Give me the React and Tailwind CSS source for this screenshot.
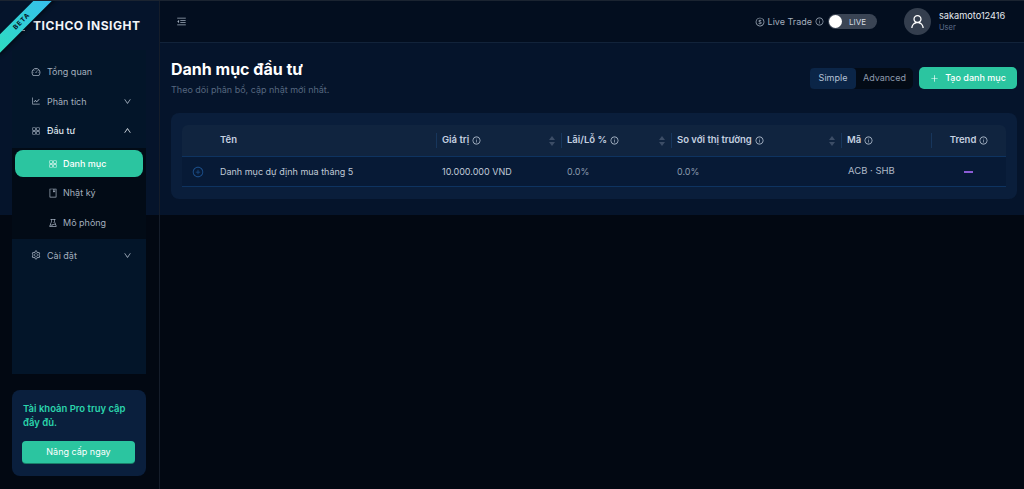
import React from "react";
import {
  AiOutlineAppstore, AiOutlineBook, AiOutlineDashboard, AiOutlineDollar, AiOutlineDown, AiOutlineExperiment,
  AiOutlineInfoCircle, AiOutlineLineChart, AiOutlineMenuFold, AiOutlinePlus, AiOutlinePlusCircle, AiOutlineSetting, AiOutlineUp, AiOutlineUser,
} from "react-icons/ai";

const columns = [
  { label: "Giá trị", width: "w-[125px]", sort: true },
  { label: "Lãi/Lỗ %", width: "w-[110px]", sort: true },
  { label: "So với thị trường", width: "w-[170px]", sort: true },
  { label: "Mã", width: "w-[90px]" },
];

function SortIcon() {
  return (
    <span className="flex flex-col gap-[2px]">
      <span className="w-0 h-0 border-x-[3px] border-x-transparent border-b-[4px] border-b-[#3c4d66]" />
      <span className="w-0 h-0 border-x-[3px] border-x-transparent border-t-[4px] border-t-[#3c4d66]" />
    </span>
  );
}

function NavItem({ icon: Icon, label, chevron, bold, className = "" }) {
  return (
    <div className={`h-[29.5px] flex items-center pl-[19px] pr-[14px] ${className}`}>
      <Icon size={10} className="text-[#a3afbe]" />
      <span className={`ml-[6px] text-[9px] ${bold ? "font-medium text-[#dfe5ec]" : "text-[#a3afbe]"}`}>{label}</span>
      {chevron === "down" && <AiOutlineDown size={9} className="ml-auto text-[#a3afbe]" />}
      {chevron === "up" && <AiOutlineUp size={9} className="ml-auto text-[#dfe5ec]" />}
    </div>
  );
}

function SubItem({ icon: Icon, label }) {
  return (
    <div className="h-[30px] flex items-center pl-[36px]">
      <Icon size={10} className="text-[#a3afbe]" />
      <span className="ml-[5px] text-[9px] text-[#a3afbe]">{label}</span>
    </div>
  );
}

export default function App() {
  return (
    <div className="w-[1024px] h-[489px] overflow-hidden flex bg-[#020812] text-white font-['Inter',sans-serif] border-t border-t-[#1b2431]">
      {/* sidebar */}
      <aside className="relative w-[160px] shrink-0 flex flex-col border-r border-r-[#151d2a] overflow-hidden">
        <div className="absolute inset-x-0 top-0 h-[214px] bg-[#05142b]" />
        <span className="absolute left-[20px] top-[29px] w-[5px] h-[1px] bg-[#c8d0da]" />
        <div className="absolute left-[-18px] top-[14px] w-[80px] h-[13px] -rotate-45 bg-gradient-to-r from-[#2fdcbd] to-[#38bdf0] shadow-[0_2px_4px_rgba(0,0,0,0.5)] flex items-center justify-center z-10">
          <span className="text-[6.5px] font-bold tracking-[1px] text-[#04121f]">BETA</span>
        </div>
        <div className="relative h-[49px] shrink-0 flex items-center pl-[33px]">
          <span className="text-[12px] font-bold tracking-[0.55px] text-[#f3f6f9]">TICHCO INSIGHT</span>
        </div>
        <nav className="relative mx-[12px] w-[134px] h-[324px] bg-[#031529] flex flex-col pt-[7px]">
          <NavItem icon={AiOutlineDashboard} label="Tổng quan" />
          <NavItem icon={AiOutlineLineChart} label="Phân tích" chevron="down" />
          <NavItem icon={AiOutlineAppstore} label="Đầu tư" chevron="up" bold />
          <div className="mt-[2.5px] bg-[#020b16] h-[90.5px] pt-[2px] flex flex-col">
            <div className="mx-[3px] mb-[1px] h-[27px] shrink-0 rounded-[8px] bg-[#2bc5a0] flex items-center pl-[33px]">
              <AiOutlineAppstore size={10} className="text-[#dff7f1]" />
              <span className="ml-[5px] text-[9px] font-medium text-white">Danh mục</span>
            </div>
            <SubItem icon={AiOutlineBook} label="Nhật ký" />
            <SubItem icon={AiOutlineExperiment} label="Mô phỏng" />
          </div>
          <NavItem icon={AiOutlineSetting} label="Cài đặt" chevron="down" className="mt-[2px]" />
        </nav>
        <div className="relative mx-[12px] mt-[16px] w-[134px] h-[86px] rounded-[8px] bg-[#0a1f3d] px-[10px] pt-[12px]">
          <p className="text-[9.5px] leading-[14px] font-semibold text-[#2bd4ac] pl-[1px]">Tài khoản Pro truy cập đầy đủ.</p>
          <button className="mt-[11px] w-[113px] h-[22px] rounded-[4px] bg-[#2bc5a0] shadow-[0_1px_0_#1a7f68] text-[9px] text-white flex items-center justify-center">
            Nâng cấp ngay
          </button>
        </div>
      </aside>

      {/* main */}
      <main className="flex-1 flex flex-col">
        <header className="h-[42px] shrink-0 flex items-center bg-[#030e1f] border-b border-b-[#12233a] pl-[16px] pr-[13px]">
          <AiOutlineMenuFold size={11} className="text-[#a3afbe]" />
          <div className="ml-auto flex items-center text-[#a3afbe]">
            <AiOutlineDollar size={10} />
            <span className="ml-[3px] text-[9px]">Live Trade</span>
            <AiOutlineInfoCircle size={9} className="ml-[3px]" />
            <div className="ml-[4px] w-[49px] h-[15px] rounded-full bg-[#3a4454] flex items-center pl-[1px]">
              <span className="w-[13px] h-[13px] rounded-full bg-white" />
              <span className="ml-[7px] text-[8px] text-[#d7dce3]">LIVE</span>
            </div>
          </div>
          <div className="ml-[27px] w-[27px] h-[27px] rounded-full bg-[#343e4e] flex items-center justify-center">
            <AiOutlineUser size={17} className="text-white" />
          </div>
          <div className="ml-[8px] flex flex-col w-[72px]">
            <span className="text-[9.2px] leading-[12px] text-[#e6ebf0]">sakamoto12416</span>
            <span className="text-[7.5px] leading-[12px] text-[#5f6f8c]">User</span>
          </div>
        </header>

        <section className="h-[172px] bg-[#05142b] pl-[11px] pr-[7px] pt-[15px]">
          <div className="flex items-start justify-between">
            <div>
              <h1 className="text-[16px] leading-[22px] font-bold text-white">Danh mục đầu tư</h1>
              <p className="mt-[3px] text-[9px] leading-[14px] text-[#56677f]">Theo dõi phân bổ, cập nhật mới nhất.</p>
            </div>
            <div className="flex items-center gap-[6px] mt-[9px]">
              <div className="h-[21px] w-[103px] rounded-[5px] bg-[#030b16] flex items-center text-[9px]">
                <span className="h-[21px] w-[46px] rounded-[4px] bg-[#0b2547] text-[#b5c3d6] flex items-center justify-center">Simple</span>
                <span className="flex-1 text-center text-[#8e9bad]">Advanced</span>
              </div>
              <button className="w-[98px] h-[22px] rounded-[5px] bg-[#2bc5a0] text-[9px] font-medium text-white flex items-center justify-center">
                <AiOutlinePlus size={9} className="mr-[6px]" />
                Tạo danh mục
              </button>
            </div>
          </div>

          <div className="mt-[16px] h-[86px] rounded-[8px] bg-[#0a1e3b] px-[11px] pt-[12px]">
            <div className="h-[32px] rounded-t-[6px] bg-[#10243f] border-b border-b-[#0e3360] flex items-center text-[9.5px] font-semibold text-[#c5d1e0]">
              <div className="w-[38px]" />
              <div className="w-[216px]">Tên</div>
              {columns.map((col) => (
                <div key={col.label} className={`${col.width} h-[15px] border-l border-l-[#17365c] flex items-center pl-[5px] pr-[6px]`}>
                  <span>{col.label}</span>
                  <AiOutlineInfoCircle size={9} className="ml-[3px]" />
                  {col.sort && <span className="ml-auto"><SortIcon /></span>}
                </div>
              ))}
              <div className="flex-1 h-[15px] border-l border-l-[#17365c] flex items-center justify-center">
                <span>Trend</span>
                <AiOutlineInfoCircle size={9} className="ml-[3px]" />
              </div>
            </div>
            <div className="h-[30px] bg-[#071a36] border-b border-b-[#0e3360] flex items-center text-[9px] text-[#aeb9c8]">
              <div className="w-[38px] pl-[10px]">
                <AiOutlinePlusCircle size={12} className="text-[#1c4f8a]" />
              </div>
              <div className="w-[222px] text-[#c0cad7]">Danh mục dự định mua tháng 5</div>
              <div className="w-[125px] text-[#c0cad7]">10.000.000 VND</div>
              <div className="w-[110px] text-[#8c9aae]">0.0%</div>
              <div className="w-[171px] text-[#8c9aae]">0.0%</div>
              <div className="w-[83px] text-[9.5px]">ACB · SHB</div>
              <div className="flex-1 flex justify-center">
                <span className="w-[9px] h-[2px] bg-[#8b5cd6]" />
              </div>
            </div>
          </div>
        </section>
      </main>
    </div>
  );
}
